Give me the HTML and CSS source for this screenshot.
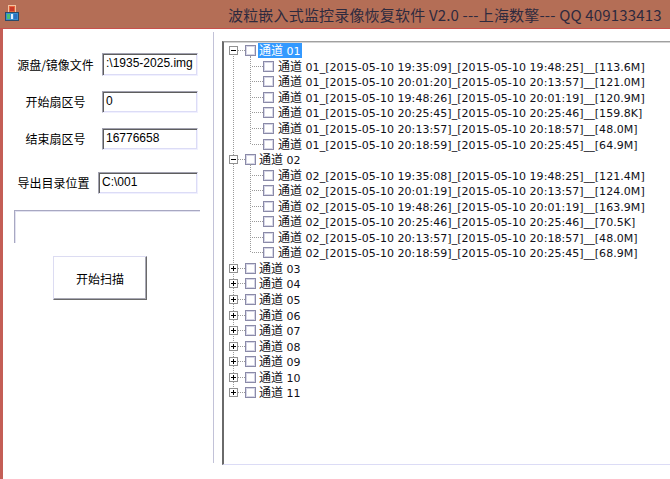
FILE: index.html
```html
<!DOCTYPE html>
<html>
<head>
<meta charset="utf-8">
<link rel="stylesheet" href="styles.css">
</head>
<body>
<div class="window">
  <div class="titlebar">
    <svg class="app-icon" width="16" height="17" viewBox="0 0 16 17">
      <rect x="4.5" y="0.5" width="7" height="7" fill="#e8643a" stroke="#f2c2a0"/>
      <rect x="6" y="2" width="4" height="4" fill="#c83a2a"/>
      <rect x="1.5" y="7.5" width="13" height="8" fill="#3a8fd0" stroke="#2a4a6a"/>
      <rect x="3" y="9" width="3" height="5" fill="#4cc070"/>
      <rect x="7" y="9" width="2" height="5" fill="#e6f0ff"/>
      <rect x="10" y="9" width="3" height="5" fill="#2f6fc0"/>
    </svg>
    <div class="title">波粒嵌入式监控录像恢复软件 V2.0 ---上海数擎--- QQ 409133413</div>
  </div>
  <div class="client">
    <div class="left">
      <div class="field f1"><span class="label">源盘/镜像文件</span><div class="input">:\1935-2025.img</div></div>
      <div class="field f2"><span class="label">开始扇区号</span><div class="input">0</div></div>
      <div class="field f3"><span class="label">结束扇区号</span><div class="input">16776658</div></div>
      <div class="field f4"><span class="label">导出目录位置</span><div class="input">C:\001</div></div>
      <div class="group"></div>
      <div class="btn">开始扫描</div>
    </div>
    <div class="sep"></div>
    <div class="tree">
      <div class="tree-inner">
        <div class="node">
          <div class="row root"><svg class="exp" width="9" height="9" viewBox="0 0 9 9"><rect x="0.5" y="0.5" width="8" height="8" fill="#fff" stroke="#919191"/><path d="M2 4.5h5" stroke="#000"/></svg><span class="hline"></span><span class="cb"></span><span class="lbl sel"><span class="cjk">通道</span> 01</span></div>
          <div class="children">
            <div class="row child"><span class="hline"></span><span class="cb"></span><span class="lbl"><span class="cjk">通道</span> 01_[2015-05-10 19:35:09]_[2015-05-10 19:48:25]__[113.6M]</span></div>
            <div class="row child"><span class="hline"></span><span class="cb"></span><span class="lbl"><span class="cjk">通道</span> 01_[2015-05-10 20:01:20]_[2015-05-10 20:13:57]__[121.0M]</span></div>
            <div class="row child"><span class="hline"></span><span class="cb"></span><span class="lbl"><span class="cjk">通道</span> 01_[2015-05-10 19:48:26]_[2015-05-10 20:01:19]__[120.9M]</span></div>
            <div class="row child"><span class="hline"></span><span class="cb"></span><span class="lbl"><span class="cjk">通道</span> 01_[2015-05-10 20:25:45]_[2015-05-10 20:25:46]__[159.8K]</span></div>
            <div class="row child"><span class="hline"></span><span class="cb"></span><span class="lbl"><span class="cjk">通道</span> 01_[2015-05-10 20:13:57]_[2015-05-10 20:18:57]__[48.0M]</span></div>
            <div class="row child"><span class="hline"></span><span class="cb"></span><span class="lbl"><span class="cjk">通道</span> 01_[2015-05-10 20:18:59]_[2015-05-10 20:25:45]__[64.9M]</span></div>
          </div>
        </div>
        <div class="node">
          <div class="row root"><svg class="exp" width="9" height="9" viewBox="0 0 9 9"><rect x="0.5" y="0.5" width="8" height="8" fill="#fff" stroke="#919191"/><path d="M2 4.5h5" stroke="#000"/></svg><span class="hline"></span><span class="cb"></span><span class="lbl"><span class="cjk">通道</span> 02</span></div>
          <div class="children">
            <div class="row child"><span class="hline"></span><span class="cb"></span><span class="lbl"><span class="cjk">通道</span> 02_[2015-05-10 19:35:08]_[2015-05-10 19:48:25]__[121.4M]</span></div>
            <div class="row child"><span class="hline"></span><span class="cb"></span><span class="lbl"><span class="cjk">通道</span> 02_[2015-05-10 20:01:19]_[2015-05-10 20:13:57]__[124.0M]</span></div>
            <div class="row child"><span class="hline"></span><span class="cb"></span><span class="lbl"><span class="cjk">通道</span> 02_[2015-05-10 19:48:26]_[2015-05-10 20:01:19]__[163.9M]</span></div>
            <div class="row child"><span class="hline"></span><span class="cb"></span><span class="lbl"><span class="cjk">通道</span> 02_[2015-05-10 20:25:46]_[2015-05-10 20:25:46]__[70.5K]</span></div>
            <div class="row child"><span class="hline"></span><span class="cb"></span><span class="lbl"><span class="cjk">通道</span> 02_[2015-05-10 20:13:57]_[2015-05-10 20:18:57]__[48.0M]</span></div>
            <div class="row child"><span class="hline"></span><span class="cb"></span><span class="lbl"><span class="cjk">通道</span> 02_[2015-05-10 20:18:59]_[2015-05-10 20:25:45]__[68.9M]</span></div>
          </div>
        </div>
        <div class="row root"><svg class="exp" width="9" height="9" viewBox="0 0 9 9"><rect x="0.5" y="0.5" width="8" height="8" fill="#fff" stroke="#919191"/><path d="M2 4.5h5M4.5 2v5" stroke="#000"/></svg><span class="hline"></span><span class="cb"></span><span class="lbl"><span class="cjk">通道</span> 03</span></div>
        <div class="row root"><svg class="exp" width="9" height="9" viewBox="0 0 9 9"><rect x="0.5" y="0.5" width="8" height="8" fill="#fff" stroke="#919191"/><path d="M2 4.5h5M4.5 2v5" stroke="#000"/></svg><span class="hline"></span><span class="cb"></span><span class="lbl"><span class="cjk">通道</span> 04</span></div>
        <div class="row root"><svg class="exp" width="9" height="9" viewBox="0 0 9 9"><rect x="0.5" y="0.5" width="8" height="8" fill="#fff" stroke="#919191"/><path d="M2 4.5h5M4.5 2v5" stroke="#000"/></svg><span class="hline"></span><span class="cb"></span><span class="lbl"><span class="cjk">通道</span> 05</span></div>
        <div class="row root"><svg class="exp" width="9" height="9" viewBox="0 0 9 9"><rect x="0.5" y="0.5" width="8" height="8" fill="#fff" stroke="#919191"/><path d="M2 4.5h5M4.5 2v5" stroke="#000"/></svg><span class="hline"></span><span class="cb"></span><span class="lbl"><span class="cjk">通道</span> 06</span></div>
        <div class="row root"><svg class="exp" width="9" height="9" viewBox="0 0 9 9"><rect x="0.5" y="0.5" width="8" height="8" fill="#fff" stroke="#919191"/><path d="M2 4.5h5M4.5 2v5" stroke="#000"/></svg><span class="hline"></span><span class="cb"></span><span class="lbl"><span class="cjk">通道</span> 07</span></div>
        <div class="row root"><svg class="exp" width="9" height="9" viewBox="0 0 9 9"><rect x="0.5" y="0.5" width="8" height="8" fill="#fff" stroke="#919191"/><path d="M2 4.5h5M4.5 2v5" stroke="#000"/></svg><span class="hline"></span><span class="cb"></span><span class="lbl"><span class="cjk">通道</span> 08</span></div>
        <div class="row root"><svg class="exp" width="9" height="9" viewBox="0 0 9 9"><rect x="0.5" y="0.5" width="8" height="8" fill="#fff" stroke="#919191"/><path d="M2 4.5h5M4.5 2v5" stroke="#000"/></svg><span class="hline"></span><span class="cb"></span><span class="lbl"><span class="cjk">通道</span> 09</span></div>
        <div class="row root"><svg class="exp" width="9" height="9" viewBox="0 0 9 9"><rect x="0.5" y="0.5" width="8" height="8" fill="#fff" stroke="#919191"/><path d="M2 4.5h5M4.5 2v5" stroke="#000"/></svg><span class="hline"></span><span class="cb"></span><span class="lbl"><span class="cjk">通道</span> 10</span></div>
        <div class="row root"><svg class="exp" width="9" height="9" viewBox="0 0 9 9"><rect x="0.5" y="0.5" width="8" height="8" fill="#fff" stroke="#919191"/><path d="M2 4.5h5M4.5 2v5" stroke="#000"/></svg><span class="hline"></span><span class="cb"></span><span class="lbl"><span class="cjk">通道</span> 11</span></div>
      </div>
    </div>
  </div>
</div>
</body>
</html>
```

FILE: styles.css
```css
html, body {
  margin: 0;
  padding: 0;
  background: #ffffff;
}

.window {
  width: 670px;
  height: 479px;
  overflow: hidden;
  background: #ffffff;
  font-family: "Noto Sans CJK SC", sans-serif;
}

.titlebar {
  height: 28px;
  background: #b46e56;
  border-bottom: 1px solid #c9504c;
  display: flex;
  align-items: center;
}

.app-icon {
  margin-left: 4px;
  margin-top: -2px;
  flex: none;
}

.title {
  margin-left: 208px;
  font-family: "Noto Sans CJK SC", sans-serif;
  font-size: 15px;
  color: #2e2a3e;
  white-space: nowrap;
  letter-spacing: 0.18px;
}

.client {
  display: flex;
  height: 450px;
  border-left: 3px solid #c45e56;
}

.left {
  width: 210px;
  flex: none;
  display: flex;
  flex-direction: column;
  align-items: flex-start;
}

.field {
  display: flex;
  align-items: center;
}

.label {
  margin-left: 7px;
  width: 91px;
  text-align: center;
  font-size: 12px;
  color: #000;
  line-height: 16px;
  white-space: nowrap;
}

.input {
  margin-left: 1px;
  width: 96px;
  height: 22px;
  box-sizing: border-box;
  border-top: 1px solid #a2a2b0;
  border-left: 1px solid #a2a2b0;
  border-right: 1px solid #f0f0ff;
  border-bottom: 1px solid #f0f0ff;
  box-shadow: inset 1px 1px 0 #5e5e5e, inset -1px -1px 0 #dcdcf6;
  font-family: "Liberation Sans", Arial, sans-serif;
  font-size: 12px;
  line-height: 15px;
  padding: 2px 0 0 3px;
  color: #000;
  white-space: nowrap;
  overflow: hidden;
}

.f1 { margin-top: 24px; }
.f1 .input { height: 23px; }
.f2 { margin-top: 15px; }
.f3 { margin-top: 15px; }
.f4 { margin-top: 22px; }
.f4 .label { width: 87px; }
.f4 .input { width: 100px; }

.group {
  margin-top: 16px;
  margin-left: 11px;
  width: 186px;
  height: 33px;
  box-sizing: border-box;
  border-top: 1px solid #a8a8c2;
  border-left: 1px solid #a8a8c2;
  box-shadow: inset 1px 1px 0 #e2e2f0;
}

.btn {
  margin-top: 13px;
  margin-left: 50px;
  width: 94px;
  height: 44px;
  box-sizing: border-box;
  border-top: 1px solid #dcdcf2;
  border-left: 1px solid #dcdcf2;
  border-right: 1px solid #6a6a6a;
  border-bottom: 1px solid #6a6a6a;
  box-shadow: inset -1px -1px 0 #a8a8b4;
  display: flex;
  align-items: center;
  justify-content: center;
  font-size: 12px;
  color: #000;
  background: #ffffff;
}

.sep {
  width: 1px;
  flex: none;
  margin-top: 3px;
  height: 431px;
  background: #c2c2d8;
}

.tree {
  margin-left: 8px;
  margin-top: 12px;
  height: 424px;
  flex: 1;
  box-sizing: border-box;
  border-top: 1px solid #a0a0a0;
  border-left: 2px solid #6a6a6a;
  border-bottom: 1px solid #dcdcf6;
  box-shadow: inset 0 1px 0 #d4d4d4;
  overflow: hidden;
}

.tree-inner {
  position: relative;
  padding-top: 1px;
}

.tree-inner::before {
  content: "";
  position: absolute;
  left: 9px;
  top: 9px;
  height: 342px;
  border-left: 1px dotted #9a9a9a;
}

.children {
  position: relative;
}

.children::before {
  content: "";
  position: absolute;
  left: 26px;
  top: -3px;
  height: 88px;
  border-left: 1px dotted #9a9a9a;
}

.row {
  height: 15.55px;
  display: flex;
  align-items: center;
  white-space: nowrap;
  position: relative;
}

.exp {
  margin-left: 5px;
  flex: none;
  position: relative;
}

.hline {
  flex: none;
  height: 0;
  border-top: 1px dotted #9a9a9a;
}

.root .hline { width: 7px; }
.child .hline { width: 11px; margin-left: 28px; }

.cb {
  flex: none;
  width: 11px;
  height: 11px;
  box-sizing: border-box;
  border: 1px solid #8a8aa8;
  box-shadow: inset 0 0 0 1px #d6d6e6;
  background: #fff;
}

.lbl {
  font-family: "DejaVu Sans", "Noto Sans CJK SC", sans-serif;
  font-size: 11px;
  line-height: 13px;
  color: #101018;
  padding: 0 1px;
  letter-spacing: 0.05px;
}

.root .lbl { margin-left: 2px; }
.child .lbl { margin-left: 3px; }

.cjk {
  font-family: "Noto Sans CJK SC", sans-serif;
  font-size: 12px;
  letter-spacing: 0;
}

.lbl.sel {
  background: #3399ff;
  color: #ffffff;
}
```
